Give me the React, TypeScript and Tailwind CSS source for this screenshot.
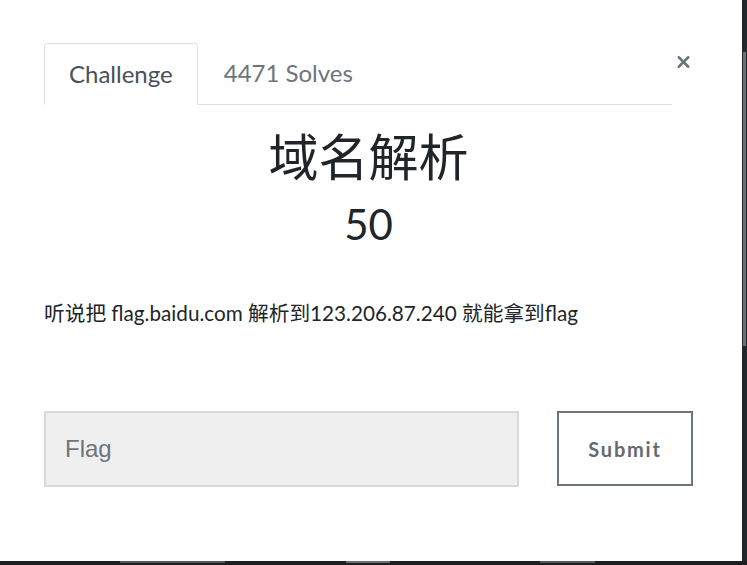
import { X } from "lucide-react";

function Tabs() {
  return (
    <div className="flex items-start">
      <ul className="flex flex-1 border-b border-[#dee2e6]">
        <li className="-mb-px rounded-t-[4px] border border-[#dee2e6] border-b-white bg-white px-[24px] py-[13px] text-[24px] leading-[34px] text-[#495057]">
          Challenge
        </li>
        <li className="px-[26px] py-[13px] text-[24px] leading-[34px] text-[#6c757d]">
          4471 Solves
        </li>
      </ul>
      <button className="mt-[8px] flex w-[21px] justify-center pl-[2px] text-[#6c757d]">
        <X size={22} strokeWidth={3.2} />
      </button>
    </div>
  );
}

export default function App() {
  return (
    <div
      className="flex h-[565px] w-[747px] flex-col overflow-hidden bg-[#1c1f22]"
      style={{ fontFamily: "Lato, 'Noto Sans CJK SC', sans-serif" }}
    >
      <div className="flex">
        <div className="h-[561px] w-[742px] bg-white pl-[44px] pr-[49px] pt-[43px]">
          <Tabs />
          <div className="flex flex-col items-center pt-[19px] text-[#212529]">
            <h2 className="text-[50px] leading-[66px]">域名解析</h2>
            <h3 className="mt-[5px] text-[42px] leading-[58px]">50</h3>
          </div>
          <p className="mt-[45px] text-[20.7px] leading-[30px] text-[#212529]">
            听说把 flag.baidu.com 解析到123.206.87.240 就能拿到flag
          </p>
          <div className="mt-[83px] flex items-start gap-[38px]">
            <div className="flex h-[76px] flex-1 items-center border-2 border-[#d6dadd] bg-[#efefef] pl-[19px]">
              <span
                className="text-[24px] text-[#6c757d]"
                style={{ fontFamily: "'Liberation Sans', Arial, sans-serif" }}
              >
                Flag
              </span>
            </div>
            <button className="flex h-[75px] w-[136px] items-center justify-center border-2 border-[#6c757d] text-[20px] font-bold tracking-[1.8px] text-[#636a71]">
              Submit
            </button>
          </div>
        </div>
        <div className="h-[561px] w-[5px] bg-[#25282b] pt-[52px]">
          <div className="ml-[1px] h-[294px] w-[3px] bg-[#6b7075]" />
        </div>
      </div>
      <div className="flex h-[4px] items-start">
        <div className="ml-[120px] h-[2px] w-[105px] bg-[#55595d]" />
        <div className="ml-[121px] h-[2px] w-[44px] bg-[#6b7075]" />
        <div className="ml-[150px] h-[2px] w-[55px] bg-[#55595d]" />
      </div>
    </div>
  );
}
